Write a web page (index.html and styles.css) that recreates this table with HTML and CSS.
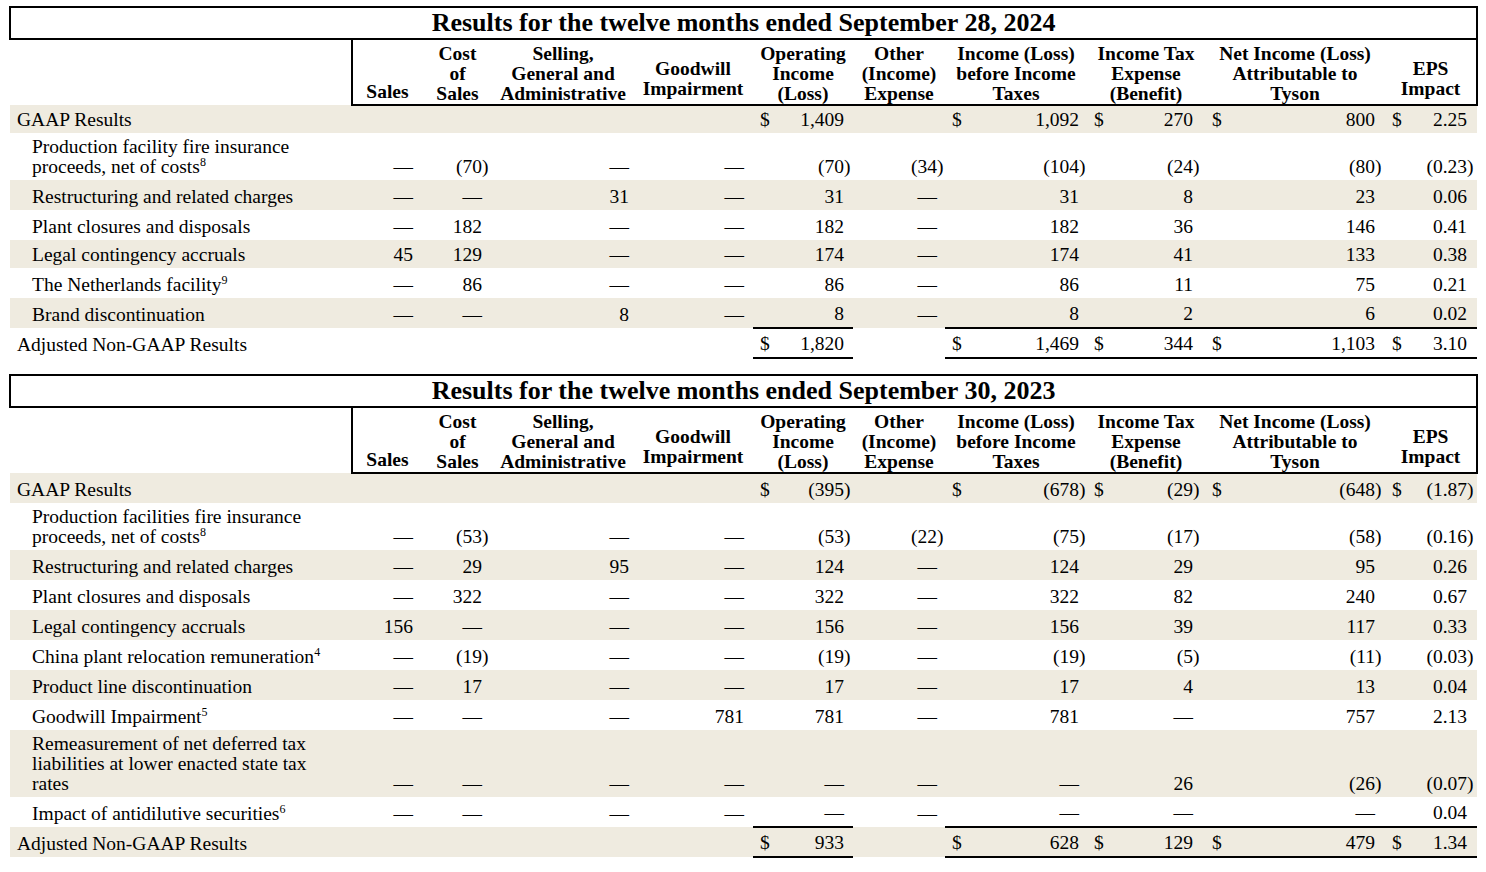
FILE: index.html
```html
<!DOCTYPE html>
<html lang="en">
<head>
<meta charset="utf-8">
<title>Non-GAAP Reconciliation</title>
<link rel="stylesheet" href="styles.css">
</head>
<body>
<div class="page">

<table class="fin">
  <colgroup>
    <col class="w-lbl"><col class="w-sales"><col class="w-cost"><col class="w-sga"><col class="w-gw"><col class="w-op"><col class="w-oth"><col class="w-ibt"><col class="w-tax"><col class="w-net"><col class="w-eps">
  </colgroup>
  <thead>
    <tr><th class="title" colspan="11">Results for the twelve months ended September 28, 2024</th></tr>
    <tr class="hd">
      <th class="blank"></th>
      <th class="first">Sales</th>
      <th>Cost<br>of<br>Sales</th>
      <th>Selling,<br>General and<br>Administrative</th>
      <th class="mid">Goodwill<br>Impairment</th>
      <th>Operating<br>Income<br>(Loss)</th>
      <th>Other<br>(Income)<br>Expense</th>
      <th>Income (Loss)<br>before Income<br>Taxes</th>
      <th>Income Tax<br>Expense<br>(Benefit)</th>
      <th>Net Income (Loss)<br>Attributable to<br>Tyson</th>
      <th class="mid last">EPS<br>Impact</th>
    </tr>
  </thead>
  <tbody>
    <tr class="alt tight">
      <td class="lbl top">GAAP Results</td>
      <td></td><td></td><td></td><td></td>
      <td><span class="d">$</span>1,409</td>
      <td></td>
      <td><span class="d">$</span>1,092</td>
      <td><span class="d">$</span>270</td>
      <td><span class="d">$</span>800</td>
      <td><span class="d">$</span>2.25</td>
    </tr>
    <tr>
      <td class="lbl">Production facility fire insurance<br>proceeds, net of costs<sup>8</sup></td>
      <td>—</td><td>(70<span class="cp">)</span></td><td>—</td><td>—</td><td>(70<span class="cp">)</span></td><td>(34<span class="cp">)</span></td><td>(104<span class="cp">)</span></td><td>(24<span class="cp">)</span></td><td>(80<span class="cp">)</span></td><td>(0.23<span class="cp">)</span></td>
    </tr>
    <tr class="alt">
      <td class="lbl">Restructuring and related charges</td>
      <td>—</td><td>—</td><td>31</td><td>—</td><td>31</td><td>—</td><td>31</td><td>8</td><td>23</td><td>0.06</td>
    </tr>
    <tr>
      <td class="lbl">Plant closures and disposals</td>
      <td>—</td><td>182</td><td>—</td><td>—</td><td>182</td><td>—</td><td>182</td><td>36</td><td>146</td><td>0.41</td>
    </tr>
    <tr class="alt tight">
      <td class="lbl">Legal contingency accruals</td>
      <td>45</td><td>129</td><td>—</td><td>—</td><td>174</td><td>—</td><td>174</td><td>41</td><td>133</td><td>0.38</td>
    </tr>
    <tr>
      <td class="lbl">The Netherlands facility<sup>9</sup></td>
      <td>—</td><td>86</td><td>—</td><td>—</td><td>86</td><td>—</td><td>86</td><td>11</td><td>75</td><td>0.21</td>
    </tr>
    <tr class="alt">
      <td class="lbl">Brand discontinuation</td>
      <td>—</td><td>—</td><td>8</td><td>—</td><td>8</td><td>—</td><td>8</td><td>2</td><td>6</td><td>0.02</td>
    </tr>
    <tr>
      <td class="lbl top">Adjusted Non-GAAP Results</td>
      <td></td><td></td><td></td><td></td>
      <td class="tot"><span class="d">$</span>1,820</td>
      <td></td>
      <td class="tot"><span class="d">$</span>1,469</td>
      <td class="tot"><span class="d">$</span>344</td>
      <td class="tot"><span class="d">$</span>1,103</td>
      <td class="tot"><span class="d">$</span>3.10</td>
    </tr>
  </tbody>
</table>

<table class="fin">
  <colgroup>
    <col class="w-lbl"><col class="w-sales"><col class="w-cost"><col class="w-sga"><col class="w-gw"><col class="w-op"><col class="w-oth"><col class="w-ibt"><col class="w-tax"><col class="w-net"><col class="w-eps">
  </colgroup>
  <thead>
    <tr><th class="title" colspan="11">Results for the twelve months ended September 30, 2023</th></tr>
    <tr class="hd">
      <th class="blank"></th>
      <th class="first">Sales</th>
      <th>Cost<br>of<br>Sales</th>
      <th>Selling,<br>General and<br>Administrative</th>
      <th class="mid">Goodwill<br>Impairment</th>
      <th>Operating<br>Income<br>(Loss)</th>
      <th>Other<br>(Income)<br>Expense</th>
      <th>Income (Loss)<br>before Income<br>Taxes</th>
      <th>Income Tax<br>Expense<br>(Benefit)</th>
      <th>Net Income (Loss)<br>Attributable to<br>Tyson</th>
      <th class="mid last">EPS<br>Impact</th>
    </tr>
  </thead>
  <tbody>
    <tr class="alt">
      <td class="lbl top">GAAP Results</td>
      <td></td><td></td><td></td><td></td>
      <td><span class="d">$</span>(395<span class="cp">)</span></td>
      <td></td>
      <td><span class="d">$</span>(678<span class="cp">)</span></td>
      <td><span class="d">$</span>(29<span class="cp">)</span></td>
      <td><span class="d">$</span>(648<span class="cp">)</span></td>
      <td><span class="d">$</span>(1.87<span class="cp">)</span></td>
    </tr>
    <tr>
      <td class="lbl">Production facilities fire insurance<br>proceeds, net of costs<sup>8</sup></td>
      <td>—</td><td>(53<span class="cp">)</span></td><td>—</td><td>—</td><td>(53<span class="cp">)</span></td><td>(22<span class="cp">)</span></td><td>(75<span class="cp">)</span></td><td>(17<span class="cp">)</span></td><td>(58<span class="cp">)</span></td><td>(0.16<span class="cp">)</span></td>
    </tr>
    <tr class="alt">
      <td class="lbl">Restructuring and related charges</td>
      <td>—</td><td>29</td><td>95</td><td>—</td><td>124</td><td>—</td><td>124</td><td>29</td><td>95</td><td>0.26</td>
    </tr>
    <tr>
      <td class="lbl">Plant closures and disposals</td>
      <td>—</td><td>322</td><td>—</td><td>—</td><td>322</td><td>—</td><td>322</td><td>82</td><td>240</td><td>0.67</td>
    </tr>
    <tr class="alt">
      <td class="lbl">Legal contingency accruals</td>
      <td>156</td><td>—</td><td>—</td><td>—</td><td>156</td><td>—</td><td>156</td><td>39</td><td>117</td><td>0.33</td>
    </tr>
    <tr>
      <td class="lbl">China plant relocation remuneration<sup>4</sup></td>
      <td>—</td><td>(19<span class="cp">)</span></td><td>—</td><td>—</td><td>(19<span class="cp">)</span></td><td>—</td><td>(19<span class="cp">)</span></td><td>(5<span class="cp">)</span></td><td>(11<span class="cp">)</span></td><td>(0.03<span class="cp">)</span></td>
    </tr>
    <tr class="alt">
      <td class="lbl">Product line discontinuation</td>
      <td>—</td><td>17</td><td>—</td><td>—</td><td>17</td><td>—</td><td>17</td><td>4</td><td>13</td><td>0.04</td>
    </tr>
    <tr>
      <td class="lbl">Goodwill Impairment<sup>5</sup></td>
      <td>—</td><td>—</td><td>—</td><td>781</td><td>781</td><td>—</td><td>781</td><td>—</td><td>757</td><td>2.13</td>
    </tr>
    <tr class="alt">
      <td class="lbl">Remeasurement of net deferred tax<br>liabilities at lower enacted state tax<br>rates</td>
      <td>—</td><td>—</td><td>—</td><td>—</td><td>—</td><td>—</td><td>—</td><td>26</td><td>(26<span class="cp">)</span></td><td>(0.07<span class="cp">)</span></td>
    </tr>
    <tr>
      <td class="lbl">Impact of antidilutive securities<sup>6</sup></td>
      <td>—</td><td>—</td><td>—</td><td>—</td><td>—</td><td>—</td><td>—</td><td>—</td><td>—</td><td>0.04</td>
    </tr>
    <tr class="alt">
      <td class="lbl top">Adjusted Non-GAAP Results</td>
      <td></td><td></td><td></td><td></td>
      <td class="tot"><span class="d">$</span>933</td>
      <td></td>
      <td class="tot"><span class="d">$</span>628</td>
      <td class="tot"><span class="d">$</span>129</td>
      <td class="tot"><span class="d">$</span>479</td>
      <td class="tot"><span class="d">$</span>1.34</td>
    </tr>
  </tbody>
</table>

</div>
</body>
</html>
```

FILE: styles.css
```css
* { box-sizing: border-box; }

body {
  margin: 0;
  background: #ffffff;
  color: #000000;
  font-family: "Liberation Serif", "Times New Roman", serif;
}

.page {
  padding: 6px 0 0 9px;
}

.fin {
  border-collapse: collapse;
  table-layout: fixed;
  width: 1467px;
  font-size: 19.5px;
  line-height: 20px;
}

.fin + .fin {
  margin-top: 15px;
}

.w-lbl { width: 342px; }
.w-sales { width: 70px; }
.w-cost { width: 71px; }
.w-sga { width: 140px; }
.w-gw { width: 120px; }
.w-op { width: 100px; }
.w-oth { width: 92px; }
.w-ibt { width: 142px; }
.w-tax { width: 118px; }
.w-net { width: 180px; }
.w-eps { width: 92px; }

.title {
  border: 2px solid #000;
  font-size: 26px;
  font-weight: bold;
  text-align: center;
  line-height: 30px;
  padding: 0;
}

.hd th {
  font-weight: bold;
  text-align: center;
  vertical-align: bottom;
  padding: 4px 0 0;
  border-bottom: 2px solid #000;
  white-space: nowrap;
}

.hd th.blank { border-bottom: none; }
.hd th.first { border-left: 2px solid #000; padding-bottom: 2px; }
.hd th.last { border-right: 2px solid #000; }
.hd th.mid { padding-bottom: 5px; }

.fin tbody tr { height: 30px; }
.fin tbody tr.tight { height: 28px; }
.fin tbody tr.alt { background: #efebe0; }

.fin tbody td {
  padding: 4px 9px 3px 7px;
  vertical-align: bottom;
  text-align: right;
  white-space: nowrap;
}

.fin tbody td:nth-child(3) { padding-right: 11px; }
.fin tbody td:nth-child(4) { padding-right: 4px; }
.fin tbody td:nth-child(7) { padding-right: 8px; }
.fin tbody td:nth-child(8) { padding-right: 8px; }
.fin tbody td:nth-child(9) { padding-right: 12px; }
.fin tbody td:nth-child(10) { padding-right: 10px; }
.fin tbody td:nth-child(11) { padding-right: 10px; }

.fin tbody td.lbl {
  text-align: left;
  white-space: nowrap;
  padding-left: 22px;
  padding-right: 0;
}

.fin tbody td.lbl.top { padding-left: 7px; }

.fin tbody td.tot {
  border-top: 2px solid #000;
  border-bottom: 2px solid #000;
}

.d { float: left; }

.cp { margin-right: -6.5px; }

sup {
  font-size: 12px;
  line-height: 0;
  vertical-align: 7px;
}
```
